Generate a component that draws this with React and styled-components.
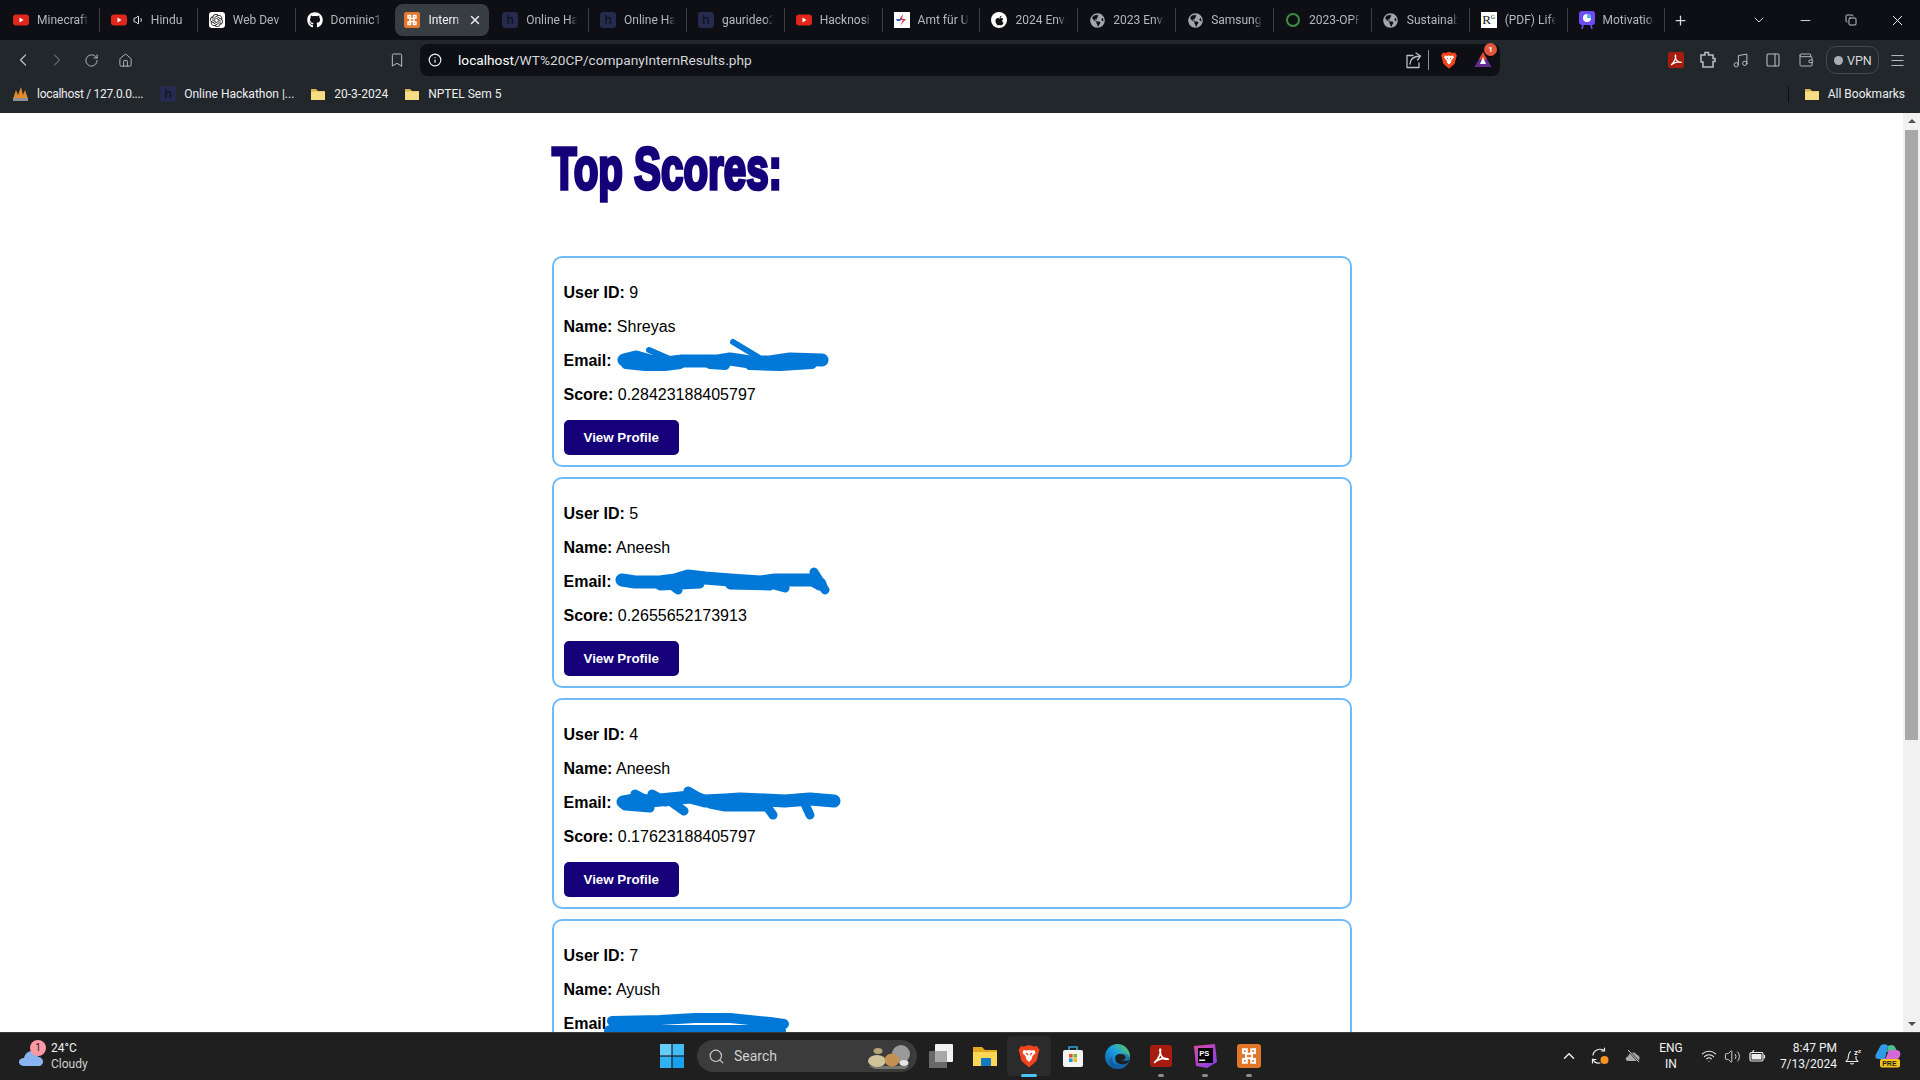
import styled, { createGlobalStyle } from 'styled-components';
import { ChevronLeft, ChevronRight, ChevronDown, ChevronUp, RotateCw, Home, Bookmark, Info, Music, PanelRight, Wallet, Menu, Plus, Minus, Copy, X, Search, Wifi, Volume1, Volume2 } from 'lucide-react';
import { FaGithub, FaApple, FaGlobeAmericas } from 'react-icons/fa';
import { SiOpenai } from 'react-icons/si';

const GlobalStyle = createGlobalStyle`
  html, body { margin: 0; height: 100%; overflow: hidden; background: #fff; }
  * { box-sizing: border-box; }
  svg { flex-shrink: 0; }
`;

const uiFont = `Roboto, "Open Sans", sans-serif`;

const Screen = styled.div`
  display: flex;
  flex-direction: column;
  height: 100vh;
  font-family: ${uiFont};
`;

/* browser chrome */
const TabStrip = styled.div`
  display: flex;
  align-items: center;
  height: 40px;
  padding-left: 2px;
  background: #0d0f14;
  flex-shrink: 0;
`;

const TabItem = styled.div`
  position: relative;
  width: 97.85px;
  height: 40px;
  padding: 4px 2px;
  &::after {
    content: '';
    display: ${(p) => (p.$noSep ? 'none' : 'block')};
    position: absolute;
    right: 0;
    top: 8px;
    width: 1px;
    height: 24px;
    background: #3b3f44;
  }
`;

const TabInner = styled.div`
  display: flex;
  align-items: center;
  gap: 8px;
  height: 32px;
  padding-left: 9px;
  border-radius: 8px;
  background: ${(p) => (p.$active ? '#383d42' : 'transparent')};
`;

const TabTitle = styled.span`
  flex: ${(p) => (p.$active ? '0 0 33px' : '0 0 51px')};
  overflow: hidden;
  white-space: nowrap;
  font-size: 12px;
  color: ${(p) => (p.$active ? '#f1f3f4' : '#b4b8bc')};
  mask-image: linear-gradient(to right, #000 85%, transparent 100%);
`;

const AudioMark = styled.span`
  display: flex;
  margin-left: -2px;
  margin-right: -2px;
  color: #e8eaed;
`;

const TabClose = styled(X)`
  margin-left: -1px;
  color: #e8eaed;
`;

const NewTab = styled(Plus)`
  margin-left: 8px;
  color: #d8dadd;
`;

const WindowButtons = styled.div`
  display: flex;
  margin-left: auto;
`;

const WindowButton = styled.div`
  display: flex;
  align-items: center;
  justify-content: center;
  width: 46px;
  height: 40px;
  color: #eceef0;
`;

const Toolbar = styled.div`
  display: flex;
  align-items: center;
  height: 40px;
  padding: 4px 0;
  background: #22272b;
  flex-shrink: 0;
`;

const NavGroup = styled.div`
  display: flex;
  align-items: center;
  width: 420px;
  padding-left: 6px;
`;

const ToolSlot = styled.div`
  display: flex;
  align-items: center;
  justify-content: center;
  width: ${(p) => p.$w || 34}px;
  height: 32px;
  flex-shrink: 0;
  margin-left: ${(p) => p.$ml || 0}px;
  color: ${(p) => (p.$dim ? '#5c6166' : '#b9bec3')};
`;

const AddressBar = styled.div`
  display: flex;
  align-items: center;
  width: 1080px;
  height: 32px;
  padding-left: 8px;
  border-radius: 8px;
  background: #0d0f14;
  flex-shrink: 0;
`;

const UrlText = styled.span`
  margin-left: 16px;
  font-size: 13.7px;
  color: #d3d6da;
  b { font-weight: 400; color: #fff; }
`;

const AddressEnd = styled.div`
  display: flex;
  align-items: center;
  margin-left: auto;
`;

const AddressDivider = styled.div`
  width: 1px;
  height: 20px;
  margin: 0 3px;
  background: #8a8f94;
`;

const BadgeWrap = styled.div`
  position: relative;
  display: flex;
  width: 18px;
  height: 18px;
`;

const CountBadge = styled.span`
  position: absolute;
  top: -8px;
  right: -5px;
  width: 13px;
  height: 13px;
  border-radius: 50%;
  background: #e0573c;
  color: #fff;
  font-size: 8px;
  font-weight: 700;
  line-height: 13px;
  text-align: center;
`;

const ToolEnd = styled.div`
  display: flex;
  align-items: center;
  width: 420px;
  padding-left: 160px;
`;

const VpnPill = styled.div`
  display: flex;
  align-items: center;
  gap: 4px;
  width: 53px;
  height: 28px;
  margin-left: 3px;
  padding-left: 7px;
  border: 1px solid #44494e;
  border-radius: 10px;
  color: #d5d8db;
  font-size: 12.5px;
`;

const VpnDot = styled.span`
  width: 9px;
  height: 9px;
  border-radius: 50%;
  background: #a9aeb3;
`;

const BookmarkBar = styled.div`
  display: flex;
  align-items: center;
  height: 33px;
  padding-bottom: 5px;
  background: #22272b;
  flex-shrink: 0;
`;

const BookmarkItem = styled.div`
  display: flex;
  align-items: center;
  gap: 8px;
  margin-left: ${(p) => p.$ml || 0}px;
  margin-right: ${(p) => p.$mr || 0}px;
  font-size: 12px;
  letter-spacing: ${(p) => (p.$tight ? '-0.28px' : 'normal')};
  white-space: nowrap;
  color: #eceef0;
`;

const BookmarkDivider = styled.div`
  width: 1px;
  height: 16px;
  margin-left: auto;
  background: #0d0f14;
`;

/* page */
const Viewport = styled.div`
  display: flex;
  flex: 1;
  min-height: 0;
`;

const PageArea = styled.main`
  flex: 1;
  overflow: hidden;
  font-family: "Liberation Sans", Arial, sans-serif;
  color: #000;
`;

const Column = styled.div`
  width: 800px;
  margin: 0 auto;
`;

const Heading = styled.h1`
  margin: 0;
  padding-top: 21px;
  height: 143px;
  font-family: "Liberation Sans", sans-serif;
  font-size: 60px;
  line-height: 70px;
  font-weight: 700;
  color: #15007a;
  white-space: nowrap;
  -webkit-text-stroke: 3.5px #15007a;
  transform: scaleX(0.672);
  transform-origin: left top;
`;

const Card = styled.section`
  height: 211px;
  margin-bottom: 10px;
  padding: 10px;
  border: 2px solid #6ebbf8;
  border-radius: 10px;
`;

const Field = styled.p`
  position: relative;
  margin: 16px 0;
  font-size: 16px;
  line-height: 18px;
`;

const Scribble = styled.svg`
  position: absolute;
  left: 36px;
  top: ${(p) => p.$top}px;
  width: 240px;
  height: 50px;
  overflow: visible;
  fill: none;
  stroke: #0078d7;
  stroke-linecap: round;
  stroke-linejoin: round;
`;

const ViewButton = styled.button`
  display: block;
  height: 35px;
  padding: 10px 20px;
  border: none;
  border-radius: 5px;
  background: #15007a;
  color: #fff;
  font-family: "Liberation Sans", Arial, sans-serif;
  font-size: 13.33px;
  font-weight: 700;
  line-height: 15px;
  cursor: pointer;
`;

const ScrollTrack = styled.div`
  display: flex;
  flex-direction: column;
  align-items: center;
  width: 17px;
  background: #f1f1f1;
  flex-shrink: 0;
`;

const ScrollArrow = styled.div`
  width: 0;
  height: 0;
  margin: ${(p) => (p.$down ? 'auto 0 6px' : '6px 0 0')};
  border-left: 4px solid transparent;
  border-right: 4px solid transparent;
  border-bottom: ${(p) => (p.$down ? 'none' : '4px solid #505050')};
  border-top: ${(p) => (p.$down ? '4px solid #505050' : 'none')};
`;

const ScrollThumb = styled.div`
  width: 13px;
  height: 610px;
  margin-top: 7px;
  background: #a8a8a8;
`;

/* taskbar */
const Taskbar = styled.footer`
  display: flex;
  align-items: center;
  height: 48px;
  padding-bottom: 1px;
  border-top: 1px solid #3c3c3c;
  background: #1f1f1f;
  color: #fff;
  flex-shrink: 0;
  font-family: ${uiFont};
`;

const Weather = styled.div`
  display: flex;
  align-items: center;
  width: 650px;
  padding-left: 19px;
  gap: 8px;
`;

const WeatherIcon = styled.div`
  position: relative;
  display: flex;
  width: 24px;
  height: 20px;
  margin-top: 7px;
`;

const WeatherBadge = styled.span`
  position: absolute;
  top: -10px;
  left: 11px;
  width: 16px;
  height: 16px;
  border-radius: 50%;
  background: #ff9aa5;
  color: #222;
  font-size: 10px;
  line-height: 16px;
  text-align: center;
`;

const TwoLines = styled.div`
  display: flex;
  flex-direction: column;
  align-items: ${(p) => p.$align || 'flex-start'};
  gap: 1px;
  font-size: 12px;
  line-height: 15px;
  color: #f2f2f2;
  white-space: nowrap;
  ${(p) => p.$width && `width: ${p.$width}px;`}
  ${(p) => p.$pr && `padding-right: ${p.$pr}px;`}
`;

const Muted = styled.span`
  color: #cfcfcf;
`;

const TaskSlot = styled.div`
  position: relative;
  display: flex;
  align-items: center;
  justify-content: center;
  width: 44px;
  height: 40px;
  border-radius: 4px;
  background: ${(p) => (p.$active ? '#2b2b2b' : 'transparent')};
  &::after {
    content: '';
    display: ${(p) => (p.$mark ? 'block' : 'none')};
    position: absolute;
    bottom: -1px;
    left: 50%;
    transform: translateX(-50%);
    width: ${(p) => (p.$active ? '16px' : '6px')};
    height: 3px;
    border-radius: 2px;
    background: ${(p) => (p.$active ? '#4cc2ff' : '#8b8b8b')};
  }
`;

const SearchPill = styled.div`
  display: flex;
  align-items: center;
  gap: 9px;
  width: 220px;
  height: 32px;
  margin: 0 2px 0 3px;
  padding-left: 11px;
  border-radius: 16px;
  background: #3b3b3b;
  color: #d0d0d0;
  font-size: 14px;
`;

const SearchArt = styled.svg`
  margin-left: auto;
  margin-right: 6px;
`;

const Tray = styled.div`
  display: flex;
  align-items: center;
  margin-left: auto;
  margin-right: 9px;
`;

const TraySlot = styled.div`
  display: flex;
  align-items: center;
  justify-content: center;
  width: ${(p) => p.$w}px;
  margin-left: ${(p) => p.$ml || 0}px;
  color: #ececec;
`;

const LetterIcon = styled.span`
  display: flex;
  align-items: center;
  justify-content: center;
  flex-shrink: 0;
  width: 16px;
  height: 16px;
  border-radius: ${(p) => p.$radius ?? 3}px;
  background: ${(p) => p.$bg};
  color: ${(p) => p.$fg};
  font-family: ${(p) => (p.$serif ? '"Liberation Serif", serif' : '"Liberation Sans", sans-serif')};
  font-size: 13px;
  line-height: 16px;
  sup { font-size: 6px; line-height: 6px; align-self: flex-start; margin-top: 2px; }
`;

const FaviconBox = styled.span`
  display: flex;
  align-items: center;
  justify-content: center;
  flex-shrink: 0;
  width: 16px;
  height: 16px;
  border-radius: ${(p) => p.$radius || 0}px;
  background: ${(p) => p.$bg || 'transparent'};
  color: ${(p) => p.$fg || '#fff'};
`;

function YouTubeIcon() {
  return (
    <svg width="16" height="16" viewBox="0 0 16 16">
      <rect y="2.5" width="16" height="11" rx="3" fill="#e1261c" />
      <path d="M6.5 5.5 L10.5 8 L6.5 10.5 Z" fill="#fff" />
    </svg>
  );
}

function XamppIcon({ size = 16 }) {
  return (
    <svg width={size} height={size} viewBox="0 0 16 16">
      <rect width="16" height="16" rx="2" fill="#e2762b" />
      <path d="M4 3.5 H6.5 V6.5 H9.5 V3.5 H12 V6 H10 V10 H12 V12.5 H9.5 V9.5 H6.5 V12.5 H4 V10 H6 V6 H4 Z" fill="none" stroke="#fff" strokeWidth="1.4" />
    </svg>
  );
}

function HackIcon() {
  return <LetterIcon $bg="#252a4e" $fg="#0d0f14">h</LetterIcon>;
}

function FolderIcon({ size = 16 }) {
  return (
    <svg width={size} height={size} viewBox="0 0 16 16">
      <path d="M1 3 H6 L8 5 H15 V14 H1 Z" fill="#d9b64f" />
      <rect x="1" y="5.5" width="14" height="8.5" rx="1" fill="#f6dc83" />
    </svg>
  );
}

function BraveIcon({ size = 16 }) {
  return (
    <svg width={size} height={size} viewBox="0 0 24 24">
      <path d="M12 1 L17 2.5 L20 2 L22.5 6 L21.5 9 L19.5 17 L12 23.5 L4.5 17 L2.5 9 L1.5 6 L4 2 L7 2.5 Z" fill="#f0441c" />
      <path d="M6.5 6 L10 6.5 L12 6 L14 6.5 L17.5 6 L18.5 9 L15.5 12 L14.5 15.5 L12 18 L9.5 15.5 L8.5 12 L5.5 9 Z" fill="#fff" />
      <path d="M9 9 L11 11 M15 9 L13 11" stroke="#f0441c" strokeWidth="1.2" />
    </svg>
  );
}

function AcrobatIcon({ size = 16 }) {
  return (
    <svg width={size} height={size} viewBox="0 0 24 24">
      <rect width="24" height="24" rx="3" fill="#a61d10" />
      <path d="M5 19 C9 16 12 9 11.5 5 C11 3.5 10 6 12 11 C13.5 14.5 16 16 20 15.5 C16 14 10 15 5 19 Z" fill="none" stroke="#fff" strokeWidth="1.8" strokeLinejoin="round" />
    </svg>
  );
}

function StoreIcon() {
  return (
    <svg width="24" height="24" viewBox="0 0 24 24">
      <path d="M8 6 V3 H16 V6" fill="none" stroke="#2aa5dc" strokeWidth="1.6" />
      <rect x="2" y="6" width="20" height="17" rx="2" fill="#f4f4f4" />
      <rect x="8" y="10" width="3.6" height="3.6" fill="#e8512a" />
      <rect x="12.4" y="10" width="3.6" height="3.6" fill="#7ab72a" />
      <rect x="8" y="14.4" width="3.6" height="3.6" fill="#1b9ee2" />
      <rect x="12.4" y="14.4" width="3.6" height="3.6" fill="#fab516" />
    </svg>
  );
}

function EdgeIcon() {
  return (
    <svg width="25" height="25" viewBox="0 0 24 24">
      <defs>
        <linearGradient id="edgeRing" x1="0" y1="1" x2="1" y2="0">
          <stop offset="0" stopColor="#0c59a4" />
          <stop offset="0.55" stopColor="#1b9de2" />
          <stop offset="1" stopColor="#5fd04a" />
        </linearGradient>
      </defs>
      <circle cx="12" cy="12" r="12" fill="url(#edgeRing)" />
      <path d="M24 13 C22 9 16 8 12 10 C8 12 9 18 13 20 C9 20 6 16 7 12 C3 14 3 20 8 23 L6 24 L18 24 L24 17 Z" fill="#114a8b" opacity="0.55" />
      <path d="M12 10 C9 11 9 17 14 19 C18 20.5 22 19 24 15 C22 16 19 16.5 16 15.5 C20 15 21 12 18 10.5 C16 9.5 14 9.5 12 10 Z" fill="#1f1f1f" />
    </svg>
  );
}

function PhpStormIcon() {
  return (
    <svg width="24" height="24" viewBox="0 0 24 24">
      <defs>
        <linearGradient id="psGrad" x1="0" y1="0" x2="1" y2="1">
          <stop offset="0" stopColor="#e84a9c" />
          <stop offset="1" stopColor="#7b3ff2" />
        </linearGradient>
      </defs>
      <path d="M1 2 L22 0 L24 18 L14 24 L3 22 Z" fill="url(#psGrad)" />
      <rect x="5" y="4" width="15" height="15" fill="#000" />
      <text x="6.2" y="12" fill="#fff" fontSize="7.6" fontWeight="700" fontFamily="Liberation Sans, sans-serif">PS</text>
      <rect x="6.2" y="15.5" width="6" height="1.4" fill="#fff" />
    </svg>
  );
}

function TriangleReward() {
  return (
    <svg width="18" height="18" viewBox="0 0 18 18">
      <path d="M9 1 L17.5 16 H0.5 Z" fill="#662d91" />
      <path d="M9 1 L13 8.5 H5 Z" fill="#e8472b" />
      <path d="M9 6 L12 13 H6 Z" fill="#fff" />
    </svg>
  );
}

function ShareIcon() {
  return (
    <svg width="17" height="17" viewBox="0 0 17 17" fill="none" stroke="#b9bec3" strokeWidth="1.3" strokeLinecap="round" strokeLinejoin="round">
      <path d="M8 3.5 H2 V15.5 H14 V11" />
      <path d="M5 12 C5 7.5 8 4.5 15 4" />
      <path d="M11 1 L15.5 4 L12.5 8" />
    </svg>
  );
}

function SyncDotIcon() {
  return (
    <svg width="18" height="18" viewBox="0 0 18 18" fill="none" stroke="#ececec" strokeWidth="1.2" strokeLinecap="round">
      <path d="M2 8 C2.5 3.5 8 0.5 13 3.5" />
      <path d="M13.5 1 V4 H10.5" />
      <path d="M2 12 C3 15 6 16.5 9 16" />
      <path d="M1.5 16 V12.5 H5" />
      <circle cx="13.5" cy="13" r="4" fill="#f7931e" stroke="none" />
    </svg>
  );
}

function BellSleepIcon() {
  return (
    <svg width="17" height="17" viewBox="0 0 17 17" fill="none" stroke="#ececec" strokeWidth="1.1" strokeLinejoin="round">
      <path d="M6 3.5 C3 4.5 3.5 9 3 11 L1 13.5 H13 L11 11 V8" />
      <path d="M5.5 15 C6 16.3 8 16.3 8.5 15" />
      <text x="9" y="7" fontSize="8" fontWeight="700" fill="#ececec" stroke="none" fontFamily="Roboto, sans-serif">z</text>
      <text x="13" y="4.5" fontSize="6" fontWeight="700" fill="#ececec" stroke="none" fontFamily="Roboto, sans-serif">z</text>
    </svg>
  );
}

function CloudGlyph() {
  return (
    <svg width="24" height="16" viewBox="0 0 24 16">
      <path d="M5 16 C1 16 0 13 0 12 C0 9 3 8 5 8 C6 4 9 1 13 1 C17 1 19 4 19 7 C22 7 24 9 24 12 C24 14 22 16 20 16 Z" fill="#8ab4f0" />
    </svg>
  );
}

function StonesArt() {
  return (
    <SearchArt width="44" height="28" viewBox="0 0 44 28">
      <path d="M2 24 H42 L38 27 H8 Z" fill="#77766f" />
      <ellipse cx="34" cy="12" rx="9" ry="9" fill="#9a9a9a" />
      <ellipse cx="10" cy="19" rx="9" ry="6" fill="#cfc39c" />
      <ellipse cx="11" cy="9" rx="4.5" ry="3" fill="#b7a478" />
      <ellipse cx="25" cy="18" rx="7.5" ry="6.5" fill="#c39152" />
      <ellipse cx="37" cy="21" rx="4.5" ry="3" fill="#e4e4e4" />
    </SearchArt>
  );
}

function ExplorerIcon() {
  return (
    <svg width="24" height="24" viewBox="0 0 24 24">
      <path d="M0 3 H9 L12 6 H24 V22 H0 Z" fill="#e2a91e" />
      <rect y="8" width="24" height="14" fill="#fcd655" />
      <rect x="8" y="14" width="10" height="8" rx="1" fill="#1279c4" />
    </svg>
  );
}

function TaskViewIcon() {
  return (
    <svg width="24" height="24" viewBox="0 0 24 24">
      <rect x="6" y="0" width="18" height="18" rx="1" fill="#f2f2f2" />
      <rect x="0" y="7" width="18" height="18" rx="1" fill="#6e6e6e" opacity="0.95" />
      <rect x="6" y="7" width="12" height="11" fill="#a8a8a8" />
    </svg>
  );
}

function WindowsIcon() {
  return (
    <svg width="24" height="24" viewBox="0 0 24 24">
      <rect width="11.4" height="11.4" fill="#65cdfb" />
      <rect x="12.6" width="11.4" height="11.4" fill="#41bcf7" />
      <rect y="12.6" width="11.4" height="11.4" fill="#32b0f2" />
      <rect x="12.6" y="12.6" width="11.4" height="11.4" fill="#17a0ec" />
    </svg>
  );
}

function CopilotIcon() {
  return (
    <svg width="26" height="24" viewBox="0 0 26 24">
      <path d="M6 1 C8 0 12 0 13 2 L10 15 H3 C0 15 0 12 1 10 Z" fill="#2f9be8" />
      <path d="M13 2 C16 0 19 1 20 3 L22 7 L12 8 Z" fill="#49c08e" />
      <path d="M14 6 H21 C25 6 26 9 25 12 C24 15 21 16 18 16 H10 Z" fill="#d36ad6" />
      <rect x="5" y="15" width="20" height="8.5" rx="2" fill="#f8c21c" />
      <text x="7.2" y="22" fill="#1f1f1f" fontSize="7" fontWeight="700" fontFamily="Liberation Sans, sans-serif">PRE</text>
    </svg>
  );
}

const tabs = [
  { title: 'Minecraft', icon: <YouTubeIcon /> },
  { title: 'Hindu', icon: <YouTubeIcon />, audio: true },
  { title: 'Web Dev', icon: <FaviconBox $bg="#fff" $fg="#222" $radius={3}><SiOpenai size={13} /></FaviconBox> },
  { title: 'Dominic10', icon: <FaviconBox><FaGithub size={16} /></FaviconBox> },
  { title: 'Intern', icon: <XamppIcon />, active: true },
  { title: 'Online Ha', icon: <HackIcon /> },
  { title: 'Online Ha', icon: <HackIcon /> },
  { title: 'gaurideo2', icon: <HackIcon /> },
  { title: 'Hacknosis', icon: <YouTubeIcon /> },
  {
    title: 'Amt für U',
    icon: (
      <FaviconBox $bg="#fff">
        <svg width="14" height="14" viewBox="0 0 14 14">
          <path d="M8 1 L4 7 H8 L5 13 L11 6 H7 Z" fill="#d8323c" />
          <path d="M1 6 H7 L5 8 H2 Z" fill="#3d5cc4" />
        </svg>
      </FaviconBox>
    ),
  },
  { title: '2024 Envir', icon: <FaviconBox $bg="#fff" $fg="#111" $radius={8}><FaApple size={11} /></FaviconBox> },
  { title: '2023 Envir', icon: <FaviconBox $fg="#a3a7ab"><FaGlobeAmericas size={15} /></FaviconBox> },
  { title: 'Samsung_', icon: <FaviconBox $fg="#a3a7ab"><FaGlobeAmericas size={15} /></FaviconBox> },
  {
    title: '2023-OPP',
    icon: (
      <svg width="16" height="16" viewBox="0 0 16 16">
        <circle cx="8" cy="8" r="6" fill="none" stroke="#3e8e41" strokeWidth="2" />
      </svg>
    ),
  },
  { title: 'Sustainabl', icon: <FaviconBox $fg="#a3a7ab"><FaGlobeAmericas size={15} /></FaviconBox> },
  { title: '(PDF) Life', icon: <LetterIcon $bg="#fff" $fg="#222" $serif $radius={0}>R<sup>G</sup></LetterIcon> },
  {
    title: 'Motivation',
    icon: (
      <svg width="16" height="18" viewBox="0 0 16 18">
        <rect width="16" height="14" rx="3" fill="#6d4df2" />
        <circle cx="8" cy="7" r="4" fill="#fff" />
        <path d="M8 7 V3 A4 4 0 0 1 12 7 Z" fill="#4cb8f0" />
        <path d="M4 14 L3 18 M12 14 L13 18" stroke="#6d4df2" strokeWidth="1.6" />
      </svg>
    ),
  },
];

const results = [
  {
    id: 9,
    name: 'Shreyas',
    score: '0.28423188405797',
    top: -17,
    strokes: [
      { w: 13, d: 'M24 25 L36 22 L50 26 L66 28 L82 26 L118 26 L130 24 L150 27 L170 27 L190 24 L222 25' },
      { w: 10, d: 'M26 29 L45 31 L65 31 L80 29 M110 29 L125 30 M150 30 L180 31 L212 29' },
      { w: 6, d: 'M49 15 L72 25 M133 7 L158 22' },
    ],
  },
  {
    id: 5,
    name: 'Aneesh',
    score: '0.2655652173913',
    top: -18,
    strokes: [
      { w: 13, d: 'M22 25 L35 27 L60 27 L75 25 L88 21 L105 23 L130 25 L160 27 L175 25 L190 25 L213 25 L220 29' },
      { w: 9, d: 'M70 29 L78 35 M170 29 L185 33 M214 17 L225 35 M60 31 L100 29 M130 30 L170 31' },
    ],
  },
  {
    id: 4,
    name: 'Aneesh',
    score: '0.17623188405797',
    top: -19,
    strokes: [
      { w: 13, d: 'M23 27 L35 25 L50 26 L70 24 L90 22 L105 26 L125 25 L140 24 L165 25 L185 26 L210 24 L234 26' },
      { w: 9, d: 'M25 31 L50 33 M110 29 L125 32 L165 32 M70 26 L84 36 M165 29 L173 40 M205 29 L210 40 M35 19 L48 26 M52 19 L66 27 M88 16 L102 24' },
    ],
  },
  {
    id: 7,
    name: 'Ayush',
    score: '',
    top: -19,
    strokes: [
      { w: 10, d: 'M12 25 L60 24 L95 22 L130 22 L170 26 L184 28' },
      { w: 12, d: 'M10 35 L180 35' },
    ],
  },
];

function ResultCard({ result }) {
  return (
    <Card>
      <Field><strong>User ID:</strong> {result.id}</Field>
      <Field><strong>Name:</strong> {result.name}</Field>
      <Field>
        <strong>Email:</strong>
        <Scribble $top={result.top} viewBox="0 0 240 50">
          {result.strokes.map((s) => (
            <path key={s.d} d={s.d} strokeWidth={s.w} />
          ))}
        </Scribble>
      </Field>
      <Field><strong>Score:</strong> {result.score}</Field>
      <ViewButton>View Profile</ViewButton>
    </Card>
  );
}

export default function App() {
  return (
    <Screen>
      <GlobalStyle />
      <TabStrip>
        {tabs.map((tab, i) => (
          <TabItem key={i} $noSep={tab.active || (tabs[i + 1] && tabs[i + 1].active)}>
            <TabInner $active={tab.active}>
              {tab.icon}
              {tab.audio && <AudioMark><Volume1 size={12} /></AudioMark>}
              <TabTitle $active={tab.active}>{tab.title}</TabTitle>
              {tab.active && <TabClose size={14} strokeWidth={2.5} />}
            </TabInner>
          </TabItem>
        ))}
        <NewTab size={15} />
        <WindowButtons>
          <WindowButton><ChevronDown size={16} strokeWidth={1.3} /></WindowButton>
          <WindowButton><Minus size={15} strokeWidth={1.4} /></WindowButton>
          <WindowButton><Copy size={12} strokeWidth={1.6} /></WindowButton>
          <WindowButton><X size={17} strokeWidth={1.4} /></WindowButton>
        </WindowButtons>
      </TabStrip>

      <Toolbar>
        <NavGroup>
          <ToolSlot><ChevronLeft size={20} strokeWidth={1.5} /></ToolSlot>
          <ToolSlot $dim><ChevronRight size={20} strokeWidth={1.5} /></ToolSlot>
          <ToolSlot><RotateCw size={15} strokeWidth={1.5} /></ToolSlot>
          <ToolSlot><Home size={15} strokeWidth={1.5} /></ToolSlot>
          <ToolSlot $ml={238}><Bookmark size={16} strokeWidth={1.5} /></ToolSlot>
        </NavGroup>
        <AddressBar>
          <Info size={14} color="#f1f3f4" strokeWidth={2} />
          <UrlText><b>localhost</b>/WT%20CP/companyInternResults.php</UrlText>
          <AddressEnd>
            <ToolSlot $w={24}><ShareIcon /></ToolSlot>
            <AddressDivider />
            <ToolSlot $w={34}><BraveIcon size={18} /></ToolSlot>
            <ToolSlot $w={34}>
              <BadgeWrap>
                <TriangleReward />
                <CountBadge>1</CountBadge>
              </BadgeWrap>
            </ToolSlot>
          </AddressEnd>
        </AddressBar>
        <ToolEnd>
          <ToolSlot $w={31}><AcrobatIcon size={16} /></ToolSlot>
          <ToolSlot $w={33}>
            <svg width="16" height="18" viewBox="0 0 16 18" fill="none" stroke="#b9bec3" strokeWidth="1.5">
              <path d="M1 4 H5 V1.5 H8.5 V4 H13 V7.5 H15 V10.5 H13 V16 H3 V11 H1 Z" />
            </svg>
          </ToolSlot>
          <ToolSlot $w={32}><Music size={17} strokeWidth={1.4} /></ToolSlot>
          <ToolSlot $w={33}><PanelRight size={16} strokeWidth={1.6} /></ToolSlot>
          <ToolSlot $w={34}><Wallet size={16} strokeWidth={1.4} /></ToolSlot>
          <VpnPill><VpnDot />VPN</VpnPill>
          <ToolSlot $w={36}><Menu size={17} strokeWidth={1.4} /></ToolSlot>
        </ToolEnd>
      </Toolbar>

      <BookmarkBar>
        <BookmarkItem $ml={12} $tight>
          <svg width="17" height="16" viewBox="0 0 17 16">
            <path d="M1 13 L4 4 L6 9 L9 1 L11 9 L13 4 L16 13 Z" fill="#e48a2a" />
            <rect x="1" y="12" width="15" height="3" fill="#8a8f99" />
          </svg>
          localhost / 127.0.0....
        </BookmarkItem>
        <BookmarkItem $ml={17}><HackIcon />Online Hackathon |...</BookmarkItem>
        <BookmarkItem $ml={16}><FolderIcon />20-3-2024</BookmarkItem>
        <BookmarkItem $ml={16}><FolderIcon />NPTEL Sem 5</BookmarkItem>
        <BookmarkDivider />
        <BookmarkItem $ml={15} $mr={15}><FolderIcon />All Bookmarks</BookmarkItem>
      </BookmarkBar>

      <Viewport>
        <PageArea>
          <Column>
            <Heading>Top Scores:</Heading>
            {results.map((r) => (
              <ResultCard key={r.id} result={r} />
            ))}
          </Column>
        </PageArea>
        <ScrollTrack>
          <ScrollArrow />
          <ScrollThumb />
          <ScrollArrow $down />
        </ScrollTrack>
      </Viewport>

      <Taskbar>
        <Weather>
          <WeatherIcon>
            <CloudGlyph />
            <WeatherBadge>1</WeatherBadge>
          </WeatherIcon>
          <TwoLines>
            <span>24°C</span>
            <Muted>Cloudy</Muted>
          </TwoLines>
        </Weather>
        <TaskSlot><WindowsIcon /></TaskSlot>
        <SearchPill>
          <Search size={17} strokeWidth={1.6} />
          Search
          <StonesArt />
        </SearchPill>
        <TaskSlot><TaskViewIcon /></TaskSlot>
        <TaskSlot><ExplorerIcon /></TaskSlot>
        <TaskSlot $active $mark><BraveIcon size={24} /></TaskSlot>
        <TaskSlot><StoreIcon /></TaskSlot>
        <TaskSlot><EdgeIcon /></TaskSlot>
        <TaskSlot $mark><AcrobatIcon size={22} /></TaskSlot>
        <TaskSlot $mark><PhpStormIcon /></TaskSlot>
        <TaskSlot $mark><XamppIcon size={24} /></TaskSlot>
        <Tray>
          <TraySlot $w={32}><ChevronUp size={18} strokeWidth={2} /></TraySlot>
          <TraySlot $w={30}><SyncDotIcon /></TraySlot>
          <TraySlot $w={36}>
            <svg width="16" height="14" viewBox="0 0 16 14">
              <path d="M3 12 C0 12 0 8 3 7.5 C4 3 10 2 12 6 C15 6 16 12 12 12 Z" fill="#a9a9a9" />
              <path d="M3 1 L14 13" stroke="#1f1f1f" strokeWidth="2" />
              <path d="M3 1 L14 13" stroke="#e0e0e0" strokeWidth="1" />
            </svg>
          </TraySlot>
          <TraySlot $w={40}><TwoLines $align="center"><span>ENG</span><span>IN</span></TwoLines></TraySlot>
          <TraySlot $w={24} $ml={6}><Wifi size={16} strokeWidth={1.6} /></TraySlot>
          <TraySlot $w={22}><Volume2 size={17} strokeWidth={1.2} /></TraySlot>
          <TraySlot $w={28}>
            <svg width="17" height="12" viewBox="0 0 17 12" fill="none" stroke="#ececec" strokeWidth="1.2">
              <rect x="1" y="2.5" width="13" height="8.5" rx="1.5" />
              <rect x="2.5" y="4" width="10" height="5.5" fill="#ececec" stroke="none" />
              <path d="M15.5 5 V8.5" />
              <path d="M5 0 L3 3" />
            </svg>
          </TraySlot>
          <TwoLines $align="flex-end" $width={70} $pr={4}>
            <span>8:47 PM</span>
            <span>7/13/2024</span>
          </TwoLines>
          <TraySlot $w={24}><BellSleepIcon /></TraySlot>
          <TraySlot $w={46}><CopilotIcon /></TraySlot>
        </Tray>
      </Taskbar>
    </Screen>
  );
}
